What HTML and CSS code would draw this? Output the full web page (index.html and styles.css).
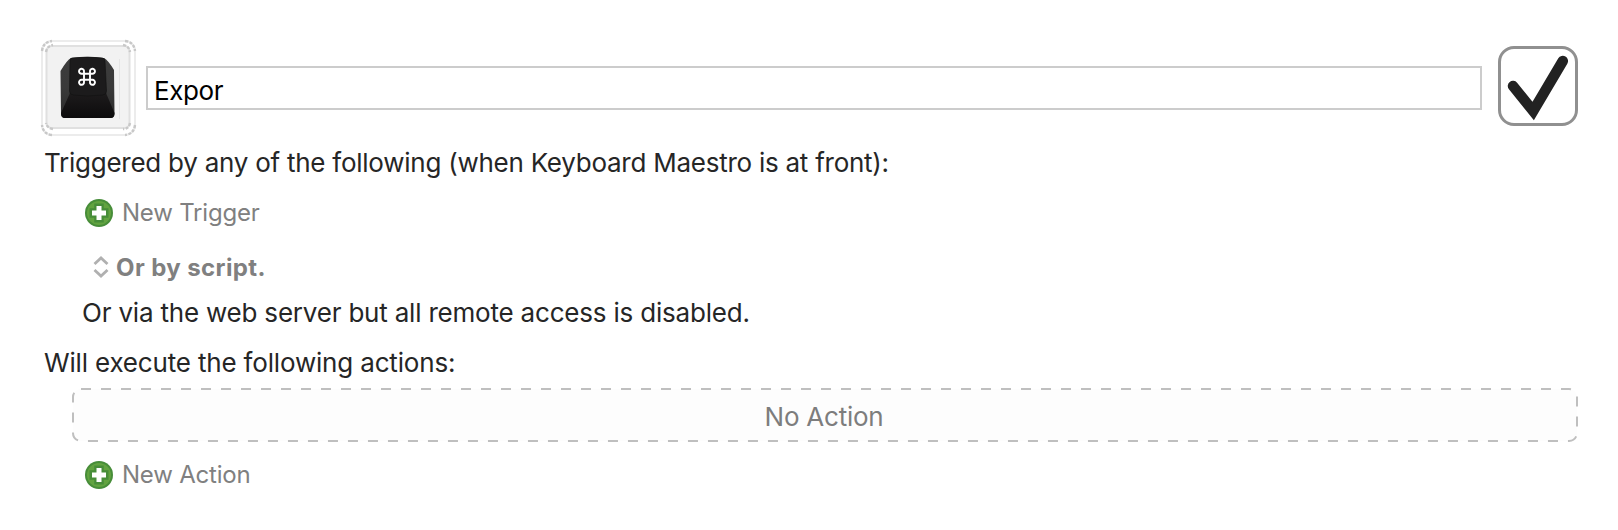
FILE: index.html
```html
<!DOCTYPE html>
<html lang="en">
<head>
<meta charset="utf-8">
<title>Macro Editor</title>
<link rel="stylesheet" href="styles.css">
</head>
<body>
<main class="editor">
  <header class="header">
    <svg class="macro-icon" viewBox="0 0 98 98">
      <defs>
        <linearGradient id="side" x1="0" y1="0" x2="0" y2="1"><stop offset="0" stop-color="#3c3c3c"/><stop offset=".5" stop-color="#3a3a3a"/><stop offset="1" stop-color="#2a2a2a"/></linearGradient>
        <linearGradient id="front" x1="0" y1="0" x2="0" y2="1"><stop offset="0" stop-color="#1d1b1c"/><stop offset="1" stop-color="#0c0b0c"/></linearGradient>
      </defs>
      <rect x="2" y="2" width="93" height="94" rx="10" fill="#fff" stroke="#ececec" stroke-width="2"/>
      <rect x="6.500" y="7" width="83" height="82" rx="5" fill="#f2f2f2" stroke="#e0e0e0" stroke-width="2"/>
      <g class="corners">
        <path d="M2 12Q3 3 12 2M85 2Q94 3 95 12M95 86Q94 95 85 96M12 96Q3 95 2 86"/>
        <path d="M6 13Q7 7 13 6M83 6Q89 7 90 13M90 84Q89 90 83 90M13 90Q7 89 6 84"/>
      </g>
      <path d="M79.500 20V80" stroke="#e5e5e5"/>
      <path d="M31 19Q48 17 64 19Q68 21 74 31L74.500 75Q74.500 79 70.500 79H25Q21 79 21 75L20.500 32Q27 21 31 19Z" fill="url(#side)"/>
      <path d="M30 54Q47 58 66 54L74.500 74Q74.500 79 70.500 79H25Q21 79 21 74Z" fill="url(#front)"/>
      <path d="M32 19Q48 17 62 19Q65 19 65 22L66.500 52Q66.500 56 62.500 56Q47 58 33.500 56Q29.500 56 29.500 52L30 22Q30 19 32 19Z" fill="#1c1b1c" stroke="#101010" stroke-width=".6"/>
      <path transform="translate(47 37.800)" d="M-3-3H3V3H-3ZM-3-3V-5.200A2.500 2.500 0 1 0-5.500-3H-3M3-3H5.500A2.500 2.500 0 1 0 3-5.200V-3M3 3V5.200A2.500 2.500 0 1 0 5.500 3H3M-3 3H-5.500A2.500 2.500 0 1 0-3 5.200V3" fill="none" stroke="#fff" stroke-width="1.900"/>
    </svg>
    <div class="name-field"><span class="name-text">Expor</span></div>
    <svg class="checkbox" viewBox="0 0 80 80">
      <rect x="1.500" y="1.500" width="77" height="77" rx="14.500" fill="#fff" stroke="#909090" stroke-width="3"/>
      <path d="M15 40L35.200 65L64.800 15" fill="none" stroke="#222" stroke-width="10.500" stroke-linecap="round"/>
    </svg>
  </header>
  <p class="line trigger-title">Triggered by any of the following (when Keyboard Maestro is at front):</p>
  <div class="add add-trigger">
    <svg class="plus" viewBox="0 0 28 28"><circle cx="14" cy="14" r="14" fill="#478d39"/><circle cx="14" cy="14" r="12" fill="#62a340"/><path d="M14 4.500V23.500M4.500 14H23.500" stroke="#478d39" stroke-width="9.500"/><path d="M14 7V21M7 14H21" stroke="#fff" stroke-width="5"/></svg>
    <span class="add-label">New Trigger</span>
  </div>
  <div class="script">
    <svg class="chevrons" viewBox="0 0 16 22"><path d="M1.500 8L8 2L14.500 8M1.500 14L8 20L14.500 14" fill="none" stroke="#b0b0b0" stroke-width="2.800"/></svg>
    <span>Or by script.</span>
  </div>
  <p class="line web">Or via the web server but all remote access is disabled.</p>
  <p class="line actions-title">Will execute the following actions:</p>
  <div class="no-action">
    <svg class="dashes" viewBox="0 0 1506 54"><rect x="1" y="1" width="1504" height="52" rx="8" fill="#fdfdfd" stroke="#bfbfbf" stroke-width="2" stroke-dasharray="10 10"/></svg>
    <span class="empty-label">No Action</span>
  </div>
  <div class="add add-action">
    <svg class="plus" viewBox="0 0 28 28"><circle cx="14" cy="14" r="14" fill="#478d39"/><circle cx="14" cy="14" r="12" fill="#62a340"/><path d="M14 4.500V23.500M4.500 14H23.500" stroke="#478d39" stroke-width="9.500"/><path d="M14 7V21M7 14H21" stroke="#fff" stroke-width="5"/></svg>
    <span class="add-label">New Action</span>
  </div>
</main>
</body>
</html>
```
FILE: styles.css
```css
* { box-sizing: border-box; }
body { margin: 0; background: #fff; font-family: Inter, "Liberation Sans", sans-serif; font-size: 26px; color: #262626; white-space: nowrap; }
svg { display: block; flex: none; }
.editor { height: 530px; padding-right: 40px; }
.header { display: flex; height: 142px; padding: 39px 0 0 40px; align-items: flex-start; }
.macro-icon { width: 98px; height: 98px; }
.corners { fill: none; stroke: #c8c8c8; stroke-width: 2.4; stroke-dasharray: 3 1.5; }
.name-field { flex: 1; height: 44px; margin: 27px 16px 0 8px; padding-left: 6px; border: 2px solid #ccc; color: #000; line-height: 45px; }
.name-text { letter-spacing: -0.4px; }
.checkbox { width: 80px; height: 80px; margin-top: 7px; }
.line { margin: 0; padding-left: 44px; }
.trigger-title { line-height: 42px; letter-spacing: -0.25px; }
.add { display: flex; align-items: center; gap: 9px; padding-left: 85px; color: #808080; font-size: 24px; letter-spacing: -0.21px; }
.add-label { padding-bottom: 2px; }
.plus { width: 28px; height: 28px; }
.add-trigger { height: 58px; }
.script { display: flex; align-items: center; gap: 7px; height: 50px; padding-left: 93px; color: #808080; font-size: 24px; font-weight: 700; letter-spacing: 0.4px; }
.chevrons { width: 16px; height: 22px; }
.web { height: 46px; padding-left: 82px; line-height: 41px; letter-spacing: -0.2px; }
.actions-title { line-height: 50px; letter-spacing: -0.17px; }
.no-action { position: relative; height: 54px; margin-left: 72px; padding-right: 2px; line-height: 57px; text-align: center; color: #7d7d7d; letter-spacing: -0.25px; }
.dashes { position: absolute; inset: 0; width: 100%; height: 54px; }
.empty-label { position: relative; }
.add-action { height: 66px; }
```
